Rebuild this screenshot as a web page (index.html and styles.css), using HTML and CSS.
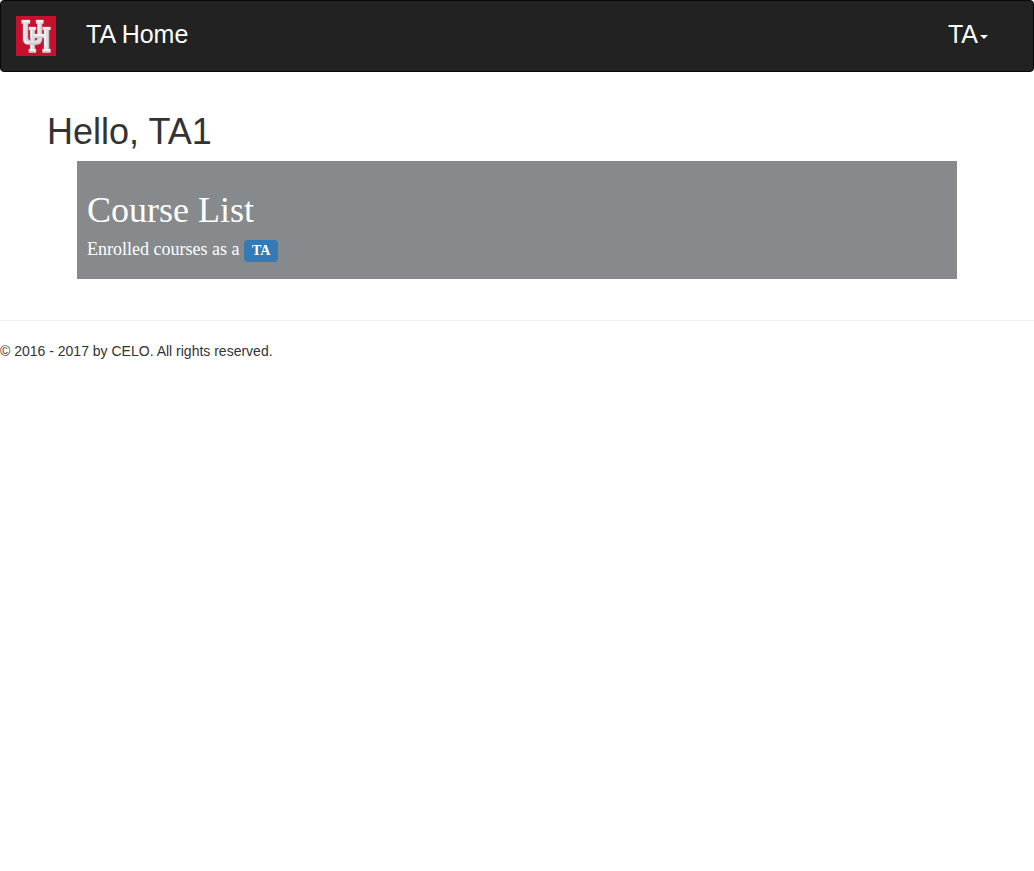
FILE: index.html
```html
<!DOCTYPE html>
<html lang="en">
<head>
<meta charset="utf-8">
<meta name="viewport" content="width=device-width, initial-scale=1">
<title>TA Home</title>
<link rel="stylesheet" href="styles.css">
</head>
<body>
<nav class="navbar">
  <a class="brand" href="#" aria-label="University home">
    <svg class="logo" viewBox="0 0 40 40" aria-hidden="true">
      <defs>
        <path id="letter-u" d="M5.500 4H14v3.500h-2V22q0 2.500 2.500 2.500h4.500q2.500 0 2.500-2.500V7.500h-1.500V4h7.500v3.500H26V23q0 5.500-5.500 5.500h-8Q7 28.500 7 23V7.500H5.500z"/>
        <path id="letter-h" d="M12.800 11H20v3h-1.200v4H28v-4h-1.500v-3h8v3H33v19h1.500v3.500h-8V33H28V22h-9.200v11H20v3.500h-7.200V33h1.500V14h-1.500z"/>
      </defs>
      <rect width="40" height="40" fill="#c8102e"/>
      <g stroke="#d44d63" stroke-width="1" stroke-linejoin="round">
        <use href="#letter-u"/><use href="#letter-h"/>
      </g>
      <use href="#letter-u" fill="#dedfe0"/>
      <use href="#letter-h" fill="#dedfe0"/>
      <path fill="none" stroke="#f7f7f7" stroke-width="1.500" d="M6 4.900h7.500M8 7v16q.5 3 3.500 4M20.500 4.900h6.500M22.500 7v10.500M13.300 11.700h6M15.300 14v8M27 11.700h7M29 14v18M18 18.700h10M13.300 33.800h6M15.300 29v4M27 33.800h7"/>
      <path fill="none" stroke="#b9bbbd" stroke-width=".8" d="M11.600 8v14.500q0 2 2.500 2M25.600 8v9M18.400 14v4M18.400 22v2.500M32.600 14v19M19 21.700h9M13 36.100h7M26.500 36.100h8M18.400 29v4M12 28.100h9q3-.5 4-3"/>
    </svg>
  </a>
  <a class="nav-title" href="#">TA Home</a>
  <button class="user-menu" type="button" aria-haspopup="true">TA<span class="caret"></span></button>
</nav>
<main class="content">
  <h1 class="greeting">Hello, TA1</h1>
  <section class="course-panel">
    <h2 class="course-title">Course List</h2>
    <p class="course-note">Enrolled courses as a <span class="badge">TA</span></p>
  </section>
</main>
<footer class="footer">
  <p class="copyright">© 2016 - 2017 by CELO. All rights reserved.</p>
</footer>
</body>
</html>
```
FILE: styles.css
```css
* { box-sizing: border-box; }
body {
  margin: 0;
  background: #fff;
  color: #333;
  font: 14px/20px "Liberation Sans", Arial, sans-serif;
}
.navbar {
  display: flex;
  align-items: flex-start;
  min-height: 72px;
  padding: 15px 45px 15px 15px;
  border: 1px solid #080808;
  border-radius: 4px;
  background: #222;
}
.logo { display: block; width: 40px; height: 40px; }
.nav-title, .user-menu {
  color: #fff;
  font-family: inherit;
  font-size: 25px;
  line-height: 36px;
  text-decoration: none;
}
.nav-title { margin-left: 30px; }
.user-menu {
  display: flex;
  align-items: center;
  gap: 2px;
  margin-left: auto;
  padding: 0;
  border: 0;
  background: none;
  cursor: pointer;
}
.caret {
  margin-top: 6px;
  border: 4px solid transparent;
  border-top-color: #fff;
  border-bottom: 0;
}
.content { padding: 40px 47px 0; }
.greeting {
  margin: 0;
  font-size: 36px;
  font-weight: 400;
  line-height: 40px;
}
.course-panel {
  margin: 9px 30px 0;
  padding: 29px 10px 16px;
  background: #868a8c;
  color: #fff;
  font-family: "Liberation Serif", "Times New Roman", serif;
}
.course-title {
  margin: 0;
  font-size: 36px;
  font-weight: 400;
  line-height: 40px;
}
.course-note {
  margin: 6px 0 0;
  font-size: 18px;
  line-height: 27px;
}
.badge {
  display: inline-block;
  padding: 0 8px;
  border-radius: 4px;
  background: #337ab7;
  font-size: 14px;
  font-weight: 700;
  line-height: 22px;
}
.footer {
  margin-top: 41px;
  padding-top: 20px;
  border-top: 1px solid #eee;
}
.copyright { margin: 0; }
```
